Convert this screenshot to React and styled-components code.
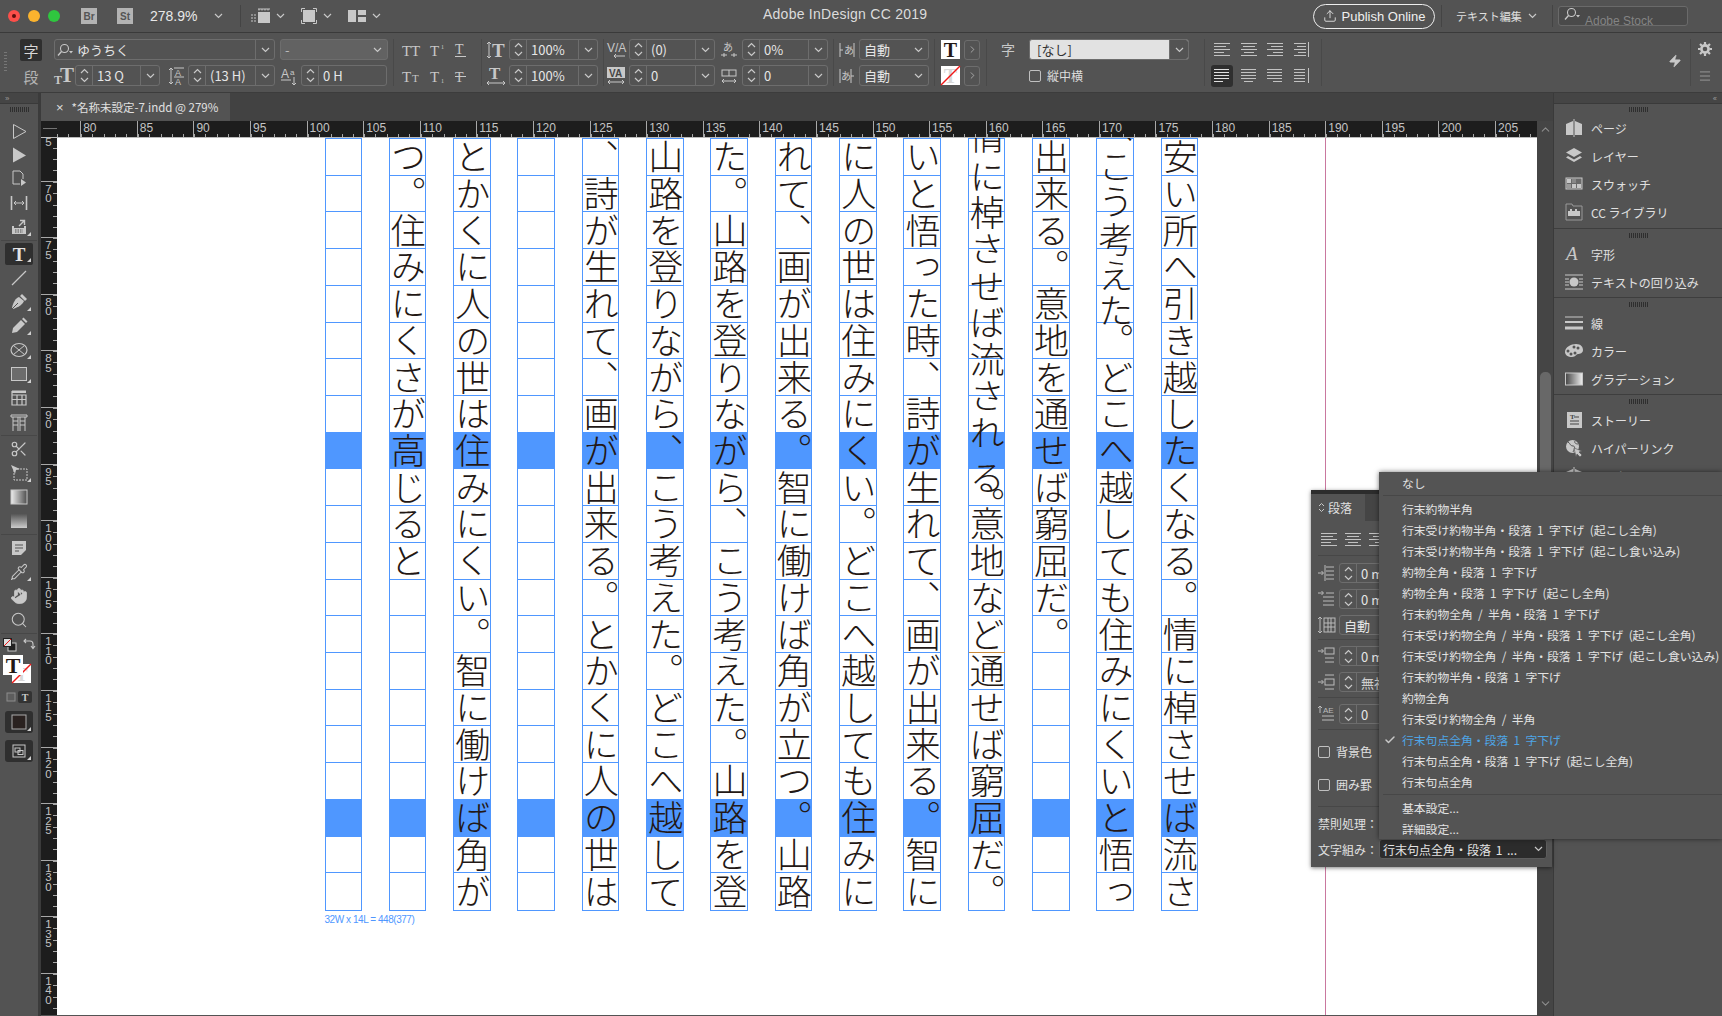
import React from 'react';
import styled, { createGlobalStyle } from 'styled-components';
import { Scissors, Hand, Search, Pipette, Check, Zap, Menu as MenuIcon, Upload, ChevronUp, ChevronDown, ChevronRight } from 'lucide-react';

const UI = `"Liberation Sans","Noto Sans CJK JP",sans-serif`;
const JP = `"Noto Sans CJK JP","Liberation Sans",sans-serif`;
const SERIF = `"Liberation Serif",serif`;
const INK = '#c8c8c8';

const Global = createGlobalStyle`
  html,body{margin:0;padding:0;background:#424242;overflow:hidden;}
  *{box-sizing:border-box;}
`;

const Window = styled.div`
  position:relative;width:1722px;height:1016px;overflow:hidden;background:#424242;
  display:flex;flex-direction:column;font-family:${UI};color:#e4e4e4;
`;

/* title bar */
const TitleBar = styled.div`
  height:33px;background:#535353;border-bottom:1px solid #3a3a3a;display:flex;align-items:center;flex:none;
`;
const Lights = styled.div`display:flex;gap:8px;margin-left:8px;width:73px;flex:none;`;
const Light = styled.span`width:12px;height:12px;border-radius:50%;background:${p => p.$c};display:flex;align-items:center;justify-content:center;
  &::after{content:"";width:4px;height:4px;border-radius:50%;background:${p => (p.$dot ? '#5a0f0d' : 'transparent')};}
`;
const AppBadge = styled.span`width:16px;height:16px;background:#b3b3b3;color:#555;font:bold 10px ${UI};display:flex;align-items:center;justify-content:center;margin-right:${p => p.$mr}px;flex:none;`;
const Zoom = styled.span`font:14px ${UI};color:#e8e8e8;width:64px;flex:none;`;
const TitleSep = styled.span`width:1px;height:22px;background:#444;flex:none;margin:0 ${p => p.$mr ?? 0}px 0 ${p => p.$ml ?? 0}px;`;
const TitleIcon = styled.span`display:flex;align-items:center;gap:6px;margin:0 ${p => p.$mr ?? 0}px 0 ${p => p.$ml ?? 0}px;flex:none;`;
const LeftGroup = styled.div`display:flex;align-items:center;width:763px;flex:none;`;
const Title = styled.div`font:14px ${UI};letter-spacing:.25px;color:#dcdcdc;width:164px;white-space:nowrap;flex:none;margin-top:-4px;`;
const RightGroup = styled.div`display:flex;align-items:center;margin-left:386px;flex:none;`;
const Publish = styled.div`height:25px;width:122px;border:1px solid #ededed;border-radius:13px;display:flex;align-items:center;justify-content:center;gap:5px;font:13px ${UI};color:#efefef;flex:none;`;
const Workspace = styled.span`font:11px ${JP};color:#e0e0e0;margin-left:14px;width:66px;flex:none;white-space:nowrap;`;
const StockSearch = styled.div`width:130px;height:20px;border:1px solid #6a6a6a;border-radius:3px;background:#4a4a4a;display:flex;align-items:flex-start;overflow:hidden;padding:0 0 0 5px;gap:4px;flex:none;`;
const StockText = styled.span`font:12px ${UI};color:#848484;margin-top:7px;white-space:nowrap;`;

/* control bar */
const ControlBar = styled.div`
  height:60px;background:#535353;border-bottom:1px solid #3c3c3c;display:flex;align-items:flex-start;padding-top:6px;flex:none;
`;
const Grip = styled.div`width:3px;height:20px;margin:13px 0 0 4px;flex:none;
  background:repeating-linear-gradient(180deg,#777 0 1px,transparent 1px 3px);`;
const ModeCol = styled.div`width:22px;margin-left:13px;display:flex;flex-direction:column;flex:none;gap:4px;`;
const ModeBtn = styled.div`height:22px;border-radius:2px;background:${p => (p.$on ? '#2f2f2f' : 'transparent')};color:${p => (p.$on ? '#d8d8d8' : '#b4b4b4')};font:15px ${JP};display:flex;align-items:center;justify-content:center;`;
const CtlGroup = styled.div`display:flex;flex-direction:column;gap:5px;margin-left:${p => p.$ml ?? 0}px;flex:none;`;
const CtlRow = styled.div`display:flex;align-items:center;height:21px;gap:${p => p.$gap ?? 0}px;`;
const VSep = styled.div`width:1px;height:47px;background:#494949;margin:0 ${p => p.$mr ?? 0}px 0 ${p => p.$ml ?? 0}px;flex:none;`;
const Field = styled.div`width:${p => p.$w}px;height:21px;border:1px solid #6d6d6d;border-radius:3px;display:flex;align-items:stretch;flex:none;overflow:hidden;margin-left:${p => p.$ml ?? 0}px;
  background:${p => p.$bg || 'transparent'};`;
const StepperBox = styled.div`width:17px;border-right:1px solid #6d6d6d;display:flex;flex-direction:column;align-items:center;justify-content:center;flex:none;color:${INK};`;
const FieldValue = styled.div`flex:1;display:flex;align-items:center;padding-left:${p => p.$pl ?? 3}px;font:13px ${JP};color:${p => p.$c || '#e6e6e6'};white-space:nowrap;overflow:hidden;gap:3px;`;
const DropSlot = styled.div`width:${p => p.$w ?? 19}px;border-left:${p => (p.$plain ? 'none' : '1px solid #6d6d6d')};background:${p => p.$bg || 'transparent'};display:flex;align-items:center;justify-content:center;flex:none;color:${INK};`;
const IconSlot = styled.div`width:${p => p.$w}px;height:21px;display:flex;align-items:center;justify-content:center;margin:${p => p.$mt ?? 0}px 0 0 ${p => p.$ml ?? 0}px;flex:none;color:${INK};`;
const TinyBtn = styled.div`width:16px;height:20px;border:1px solid #6d6d6d;border-radius:3px;display:flex;align-items:center;justify-content:center;color:${INK};margin-left:4px;`;
const CheckBox = styled.span`width:12px;height:12px;border:1px solid #c0c0c0;border-radius:2px;flex:none;`;
const CheckLabel = styled.span`font:12px ${JP};color:#dcdcdc;white-space:nowrap;`;
const LiteBtn = styled.div`width:22px;height:22px;border-radius:3px;background:${p => (p.$on ? '#2f2f2f' : 'transparent')};display:flex;align-items:center;justify-content:center;margin-left:${p => p.$ml ?? 0}px;flex:none;`;
const EndCol = styled.div`width:28px;display:flex;flex-direction:column;align-items:center;gap:13px;padding-top:3px;flex:none;color:${INK};`;

/* workspace */
const Main = styled.div`flex:1;display:flex;min-height:0;`;
const LeftDock = styled.div`width:38px;flex:none;background:#535353;display:flex;flex-direction:column;`;
const DockHeader = styled.div`height:11px;background:#454545;border-bottom:1px solid #3a3a3a;color:#9a9a9a;font:8px ${UI};letter-spacing:-1px;display:flex;align-items:center;padding:0 ${p => p.$pad ?? 0}px;justify-content:${p => p.$end ? 'flex-end' : 'flex-start'};flex:none;`;
const GripH = styled.div`width:${p => p.$w ?? 19}px;height:5px;margin:${p => p.$m ?? '3px auto 0'};background:repeating-linear-gradient(90deg,#2e2e2e 0 1px,transparent 1px 2px);flex:none;`;
const ToolList = styled.div`display:flex;flex-direction:column;align-items:center;margin-top:7px;color:${INK};`;
const Tool = styled.div`position:relative;width:28px;height:${p => (p.$on ? 22 : 24)}px;margin:${p => (p.$on ? '1px 0' : 0)};flex:none;display:flex;align-items:center;justify-content:center;border-radius:2px;background:${p => (p.$on ? '#2f2f2f' : 'transparent')};
  &::after{content:"";display:${p => (p.$fly ? 'block' : 'none')};position:absolute;right:2px;bottom:3px;border-style:solid;border-width:0 0 4px 4px;border-color:transparent transparent #d0d0d0 transparent;}
`;
const ToolSep = styled.div`width:36px;height:1px;background:#474747;margin:${p => p.$m ?? '1px 0 1px'};flex:none;`;
const SmallRow = styled.div`display:flex;align-items:center;justify-content:center;gap:${p => p.$gap ?? 6}px;width:100%;height:${p => p.$h}px;margin-top:${p => p.$mt ?? 0}px;flex:none;`;
const ProxyWrap = styled.div`width:32px;height:30px;margin-top:2px;flex:none;`;
const DarkWell = styled.div`position:relative;width:28px;height:22px;background:#2f2f2f;border-radius:3px;display:flex;align-items:center;justify-content:center;margin-top:${p => p.$mt}px;flex:none;
  &::after{content:"";position:absolute;right:2px;bottom:2px;border-style:solid;border-width:0 0 4px 4px;border-color:transparent transparent #d0d0d0 transparent;}
`;
const Gutter = styled.div`width:3px;background:#3b3b3b;flex:none;`;

const Center = styled.div`width:1512px;flex:none;display:flex;flex-direction:column;`;
const TabBar = styled.div`height:28px;background:#424242;display:flex;flex:none;`;
const DocTab = styled.div`width:189px;background:#535353;display:flex;align-items:center;padding-left:15px;font:11.5px ${JP};color:#e0e0e0;white-space:nowrap;`;
const TabClose = styled.span`font:13px ${UI};margin-right:8px;color:#dcdcdc;`;
const Stage = styled.div`flex:1;display:grid;grid-template-columns:16px 1480px 16px;grid-template-rows:17px 877px 1px;min-height:0;`;
const Corner = styled.div`background:#1d1d1d;position:relative;border-bottom:1px solid #bbb;
  &::after{content:"";position:absolute;left:2px;right:0;top:3px;bottom:2px;background:linear-gradient(#bbb,#bbb) 0 4px/100% 1px no-repeat;opacity:.55;}
`;
const TopRuler = styled.div`background:#1d1d1d;display:flex;overflow:hidden;border-bottom:1px solid #bbb;`;
const TICKS_H = `repeating-linear-gradient(90deg,#a8a8a8 0 1px,transparent 1px 11.32px) 0 100%/100% 3px no-repeat`;
const TICKS_V = `repeating-linear-gradient(180deg,#a8a8a8 0 1px,transparent 1px 11.32px) 100% 0/4px 100% no-repeat`;
const HSeg = styled.div`width:${p => p.$w ?? 56.6}px;flex:none;border-left:${p => (p.$blank ? 'none' : '1px solid #a8a8a8')};background:${TICKS_H};font:12px ${UI};color:#c4c4c4;padding-left:2px;line-height:14px;`;
const VRuler = styled.div`background:#1d1d1d;overflow:hidden;display:flex;flex-direction:column;`;
const VSeg = styled.div`height:56.6px;flex:none;border-top:1px solid #a8a8a8;background:${TICKS_V};padding:3px 0 0 3px;margin-top:${p => p.$mt ?? 0}px;`;
const VDigit = styled.div`font:11.5px/9.5px ${UI};color:#c4c4c4;width:9px;text-align:center;`;
const Canvas = styled.div`position:relative;background:#fff;overflow:hidden;padding-left:267.5px;display:flex;flex-direction:column;`;
const Guide = styled.div`position:absolute;left:1268px;top:0;bottom:0;width:1px;background:#c9789f;`;
const Frame = styled.div`display:flex;gap:26.95px;flex:none;`;
const GridCol = styled.div`width:37.4px;height:773px;border:1px solid #4f97ff;border-bottom-width:1px;display:grid;grid-template-rows:repeat(21,1fr);flex:none;`;
const Cell = styled.div`position:relative;display:flex;align-items:center;justify-content:center;min-height:0;
  background:${p => (p.$hi ? '#4f97ff' : 'transparent')};
  border-bottom:${p => (p.$last ? 'none' : `1px solid ${p.$mark ? '#c98a3c' : '#4f97ff'}`)};
`;
const Glyph = styled.span`display:block;writing-mode:vertical-rl;font:300 35px/36px ${JP};color:#231815;width:36px;height:35px;flex:none;transform:translateY(${p => p.$lift ?? 0}px);`;
const GlyphOver = styled(Glyph)`position:absolute;left:0;top:0;`;
const Caption = styled.div`font:10px ${UI};color:#4f97ff;margin-top:3px;letter-spacing:-.45px;`;
const ScrollBar = styled.div`grid-column:3;grid-row:1 / span 3;background:#454545;display:flex;flex-direction:column;align-items:center;color:#8d8d8d;padding-top:2px;`;
const Thumb = styled.div`width:11px;height:260px;background:#686868;border-radius:5px;margin-top:236px;flex:none;`;
const ScrollEnd = styled.div`margin-top:auto;margin-bottom:2px;`;
const FootStrip = styled.div`grid-column:1 / span 2;background:#535353;`;

/* right dock */
const RightDock = styled.div`width:169px;flex:none;background:#535353;border-left:1px solid #3a3a3a;display:flex;flex-direction:column;`;
const PanelGroup = styled.div`border-bottom:${p => (p.$open ? 'none' : '1px solid #3e3e3e')};padding:${p => (p.$first ? 2 : 3)}px 0 ${p => (p.$first ? 2 : 1)}px;`;
const PanelRow = styled.div`height:28px;display:flex;align-items:center;color:${INK};padding-left:11px;`;
const PanelIcon = styled.div`width:18px;height:18px;display:flex;align-items:center;justify-content:center;flex:none;`;
const PanelLabel = styled.span`margin-left:8px;font:12px ${JP};color:#e0e0e0;white-space:nowrap;`;

/* paragraph panel */
const ParaPanel = styled.div`position:absolute;left:1311px;top:490px;width:241px;height:377px;background:#535353;border-top:4px solid #2c2c2c;box-shadow:0 1px 4px rgba(0,0,0,.5);display:flex;flex-direction:column;color:${INK};`;
const ParaTabs = styled.div`height:27px;background:#454545;display:flex;flex:none;`;
const ParaTab = styled.div`width:54px;background:#535353;display:flex;align-items:center;padding-left:7px;gap:3px;font:12px ${JP};color:#e0e0e0;`;
const ParaSection = styled.div`padding:${p => p.$pad ?? '4px 0'};border-bottom:${p => (p.$end ? 'none' : '1px solid #474747')};margin:0 7px;flex:none;`;
const ParaRow = styled.div`height:${p => p.$h ?? 26}px;display:flex;align-items:center;`;
const ParaLabel = styled.span`font:12px ${JP};color:#e0e0e0;white-space:nowrap;width:${p => (p.$w ? `${p.$w}px` : 'auto')};margin-left:${p => p.$ml ?? 0}px;flex:none;`;
const ParaField = styled.div`margin-left:4px;width:90px;height:20px;border:1px solid #6d6d6d;border-radius:3px;display:flex;overflow:hidden;flex:none;`;
const AlignRowGap = styled.span`width:${p => p.$w}px;flex:none;`;
const JSelect = styled.div`width:168px;height:20px;background:#2c2c2c;border:1px solid #5c5c5c;border-radius:3px;display:flex;align-items:center;justify-content:space-between;padding:0 3px 0 3px;font:12px ${JP};word-spacing:2px;color:#e4e4e4;white-space:nowrap;margin-left:${p => p.$ml}px;flex:none;`;

const DropMenu = styled.div`position:absolute;left:1379px;top:472px;width:343px;height:367px;background:#545454;box-shadow:0 0 5px rgba(0,0,0,.55);display:flex;flex-direction:column;`;
const MenuRow = styled.div`height:21px;flex:none;display:flex;align-items:center;font:11.8px ${JP};word-spacing:2.7px;color:${p => (p.$sel ? '#4ea5e6' : '#e2e2e2')};white-space:pre;padding-left:${p => (p.$sel ? 5 : 23)}px;`;
const MenuCheck = styled.span`width:18px;display:flex;color:#c8c8c8;flex:none;`;
const MenuSep = styled.div`height:1px;background:#474747;margin:${p => p.$m} 0 ${p => p.$m} 4px;flex:none;`;

/* ---------- drawings ---------- */
const Svg = ({ w = 18, h = 18, vb, children }) => (
  <svg width={w} height={h} viewBox={vb || `0 0 ${w} ${h}`} fill="none" stroke="none" style={{ display: 'block', flex: 'none', overflow: 'visible' }}>{children}</svg>
);
const T = ({ x, y, s, w = 'bold', f = SERIF, c = INK, a = 'start', st, children }) => (
  <text x={x} y={y} fontSize={s} fontWeight={w} fontFamily={f} fontStyle={st} fill={c} textAnchor={a} stroke="none">{children}</text>
);
const Lines = ({ ys, x1, x2, sw = 1, c = INK }) => ys.map((y, i) => {
  const a = Array.isArray(x1) ? x1[i] : x1; const b = Array.isArray(x2) ? x2[i] : x2;
  return <line key={i} x1={a} x2={b} y1={y} y2={y} stroke={c} strokeWidth={sw} />;
});
const Chev = ({ c = INK }) => <Svg w={9} h={6}><polyline points="1,1 4.5,4.5 8,1" stroke={c} strokeWidth="1.2" /></Svg>;
const ChevUp = ({ c = INK }) => <Svg w={9} h={6}><polyline points="1,5 4.5,1.5 8,5" stroke={c} strokeWidth="1.2" /></Svg>;

const Stepper = () => <StepperBox><ChevUp /><Svg w={1} h={3} /><Chev /></StepperBox>;
const Drop = ({ w, plain }) => <DropSlot $w={w} $plain={plain}><Chev /></DropSlot>;

const SearchGlass = () => (
  <Svg w={17} h={14}>
    <circle cx="7.5" cy="5.5" r="4" stroke={INK} strokeWidth="1.1" />
    <line x1="4.5" y1="8.5" x2="1" y2="12.5" stroke={INK} strokeWidth="1.4" />
    <path d="M12 8h4l-2 2.5z" fill={INK} />
  </Svg>
);
const Gear = () => (
  <Svg w={14} h={14}>
    <circle cx="7" cy="7" r="3.6" stroke={INK} strokeWidth="2.6" />
    <path d="M7 0v2.500M7 11.500V14M0 7h2.500M11.500 7H14M2 2l1.800 1.800M10.200 10.200L12 12M12 2l-1.800 1.800M3.800 10.200L2 12" stroke={INK} strokeWidth="2.200" />
  </Svg>
);
const ScreenModeA = () => (
  <Svg w={19} h={16}>
    <rect x="7" y="4" width="12" height="11" fill={INK} />
    <Lines ys={[1]} x1={7} x2={19} c={INK} />
    <path d="M0 7h5M0 10h5M0 13h5M8 1v1.5M11 1v1.5M14 1v1.5M17 1v1.5" stroke={INK} strokeDasharray="2 1" />
  </Svg>
);
const ScreenModeB = () => (
  <Svg w={16} h={16}>
    <rect x="2" y="2" width="12" height="12" fill={INK} />
    <path d="M0.5 4V.5H4M12 .5h3.500V4M15.500 12v3.500H12M4 15.500H.5V12" stroke={INK} />
  </Svg>
);
const LayoutIcon = () => (
  <Svg w={18} h={14}>
    <rect x="0" y="1" width="8" height="12" fill={INK} /><rect x="10" y="1" width="8" height="5" fill={INK} /><rect x="10" y="8" width="8" height="5" fill={INK} />
  </Svg>
);

const Small = {
  size: <Svg w={20} h={20}><T x={0} y={18} s={12}>T</T><T x={6} y={16} s={21}>T</T></Svg>,
  lead: <Svg w={16} h={20}><path d="M3 2v16M1 4l2-2 2 2M1 16l2 2 2-2" stroke={INK} /><line x1="6" x2="16" y1="2" y2="2" stroke={INK} /><T x={7} y={10} s={9} w="normal" f={UI}>A</T><line x1="6" x2="16" y1="11" y2="11" stroke={INK} /><T x={7} y={19} s={9} w="normal" f={UI}>A</T></Svg>,
  base: <Svg w={16} h={20}><T x={0} y={12} s={12} w="normal" f={UI}>A</T><T x={9} y={9} s={8} w="normal" f={UI}>a</T><line x1="0" x2="10" y1="14" y2="14" stroke={INK} /><path d="M13 11v8M11 17l2 2 2-2" stroke={INK} /></Svg>,
  vscale: <Svg w={20} h={20}><path d="M3 2v16M1 4l2-2 2 2M1 16l2 2 2-2" stroke={INK} /><T x={6} y={17} s={19}>T</T></Svg>,
  hscale: <Svg w={20} h={20}><T x={3} y={13} s={17}>T</T><path d="M1 17h18M3 15l-2 2 2 2M17 15l2 2-2 2" stroke={INK} /></Svg>,
  kern: <Svg w={19} h={20}><T x={0} y={12} s={12} w="normal" f={UI}>V/A</T><path d="M7 16h11M9 14l-2 2 2 2" stroke={INK} /></Svg>,
  track: <Svg w={19} h={20}><rect x="0" y="1" width="18" height="11" fill={INK} /><T x={2} y={11} s={10} f={UI} c="#444">VA</T><path d="M1 16h16M3 14l-2 2 2 2M15 14l2 2-2 2" stroke={INK} /></Svg>,
  tsume: <Svg w={16} h={20}><T x={2} y={11} s={10} w="normal" f={JP}>あ</T><path d="M0 15h6M10 15h6M3 13v4M13 13v4" stroke={INK} /></Svg>,
  grid: <Svg w={16} h={20}><rect x="1" y="4" width="14" height="6" stroke={INK} /><line x1="8" x2="8" y1="4" y2="10" stroke={INK} /><path d="M1 15h14M3 13l-2 2 2 2M13 13l2 2-2 2" stroke={INK} /></Svg>,
  mojiA: <Svg w={16} h={20}><path d="M1 3v14M15 3v14" stroke={INK} /><path d="M1 10h3" stroke={INK} /><T x={5} y={14} s={10} w="normal" f={JP}>あ</T></Svg>,
  mojiB: <Svg w={16} h={20}><path d="M1 3v14M12 3v14" stroke={INK} /><T x={2} y={14} s={10} w="normal" f={JP}>あ</T><path d="M12 10h3" stroke={INK} /></Svg>,
};
const AlignGlyph = ({ kind, rows }) => {
  const sets = {
    l: [[0, 16], [0, 12], [0, 16], [0, 10], [0, 16]],
    c: [[0, 16], [2, 14], [0, 16], [3, 13], [0, 16]],
    r: [[0, 16], [4, 16], [0, 16], [6, 16], [0, 16]],
    t: [[0, 12], [3, 12], [0, 12], [4, 12], [0, 12]],
    j: [[0, 15], [0, 15], [0, 15], [0, 15], [0, 9]],
    jc: [[0, 15], [0, 15], [0, 15], [0, 15], [3, 12]],
    jr: [[0, 15], [0, 15], [0, 15], [0, 15], [6, 15]],
    jt: [[0, 11], [0, 11], [0, 11], [0, 11], [0, 11]],
  }[kind];
  const ys = [1.5, 4.5, 7.5, 10.5, 13.5];
  return (
    <Svg w={16} h={15}>
      {sets.map((s, i) => <line key={i} x1={s[0]} x2={s[1]} y1={ys[i]} y2={ys[i]} stroke={rows || '#c2c2c2'} />)}
      {(kind === 't' || kind === 'jt') && <line x1="14.5" x2="14.5" y1="0" y2="15" stroke="#c2c2c2" />}
    </Svg>
  );
};
const FillSwatch = () => <Svg w={19} h={19}><rect width="19" height="19" fill="#fff" /><T x={9.5} y={16.5} s={20} c="#231815" a="middle">T</T></Svg>;
const StrokeSwatch = () => <Svg w={19} h={19}><rect width="19" height="19" fill="#fff" /><T x={9.5} y={16.5} s={20} c="#d8d8d8" a="middle">T</T><line x1="0" y1="19" x2="19" y2="0" stroke="#f01818" strokeWidth="1.5" /></Svg>;

const I = {
  select: <Svg vb="0 0 18 18"><path d="M3.500 2.500v14L16 9.500z" stroke={INK} /></Svg>,
  direct: <Svg vb="0 0 18 18"><path d="M3 1.500v15L16 9.500z" fill={INK} /></Svg>,
  page: <Svg vb="0 0 18 18"><path d="M3 1h7l3 3v5M3 1v13h7" stroke={INK} /><path d="M11 9l5 3.500-5 3.500z" fill={INK} /></Svg>,
  gap: <Svg vb="0 0 18 18"><path d="M1.500 2v14M16.500 2v14" stroke={INK} strokeWidth="1.6" /><path d="M4 9h10M6 7L4 9l2 2M12 7l2 2-2 2" stroke={INK} /></Svg>,
  collect: <Svg vb="0 0 18 18"><path d="M2 8h2v2h10v-2h2v8H2z" fill={INK} /><path d="M9 8l5-5M10 2.500h4.500V7" stroke={INK} strokeWidth="1.400" /><path d="M5 12h8M5 14h8" stroke="#555" strokeDasharray="1.500 1" /></Svg>,
  type: <Svg vb="0 0 18 18"><T x={9} y={16} s={19} c="#e4e4e4" a="middle">T</T></Svg>,
  line: <Svg vb="0 0 18 18"><line x1="2" y1="16" x2="16" y2="2" stroke={INK} strokeWidth="1.200" /></Svg>,
  pen: <Svg vb="0 0 18 18"><path d="M2 15C3 9 6 5 9 4l5 4c-1 3-5 6-11 8z" fill={INK} /><path d="M10 3l2-2 5 5-2 2z" fill={INK} /><line x1="2" y1="16" x2="8" y2="10" stroke="#535353" /></Svg>,
  pencil: <Svg vb="0 0 18 18"><path d="M2 16l1-5L11 3l4 4-8 8z" fill={INK} /><path d="M12 2l1.500-1.500 4 4L16 6z" fill={INK} /></Svg>,
  ellipse: <Svg vb="0 0 18 18"><ellipse cx="9" cy="9" rx="8" ry="6.500" stroke={INK} strokeWidth="1.200" /><path d="M3.500 4.500l11 9M14.500 4.500l-11 9" stroke={INK} /></Svg>,
  rect: <Svg vb="0 0 18 18"><rect x="1.500" y="2.500" width="15" height="13" fill="#6c6c6c" stroke={INK} /></Svg>,
  gridT: <Svg vb="0 0 18 18"><path d="M2 2h14M2 2v14h14V6H2M2 10.500h14M7 6v10M12 6v10" stroke={INK} strokeWidth="1.200" /><path d="M2 2h14v2H2z" fill={INK} /></Svg>,
  colT: <Svg vb="0 0 18 18"><path d="M1 2h16v2H1zM3 4v14M8 4v14M15 4v14M10 4v14" stroke={INK} /><path d="M3 8h5M3 12h5M10 8h5M10 12h5" stroke={INK} /></Svg>,
  free: <Svg vb="0 0 18 18"><rect x="4" y="5" width="13" height="11" stroke={INK} strokeDasharray="2 1" /><path d="M1 1l9 4-4 1-1 4z" fill={INK} /></Svg>,
  grad: <Svg vb="0 0 18 18"><defs><linearGradient id="g1"><stop offset="0" stopColor="#eee" /><stop offset="1" stopColor="#4e4e4e" /></linearGradient></defs><rect x="1" y="2" width="16" height="14" fill="url(#g1)" stroke={INK} /></Svg>,
  feather: <Svg vb="0 0 18 18"><defs><linearGradient id="g2" x1="0" x2="0" y1="0" y2="1"><stop offset="0" stopColor="#555" /><stop offset="1" stopColor="#ccc" /></linearGradient></defs><rect x="1" y="2" width="16" height="14" fill="url(#g2)" /></Svg>,
  note: <Svg vb="0 0 18 18"><path d="M2 2h14v9l-5 5H2z" fill={INK} /><path d="M5 6h8M5 9h8M5 12h4" stroke="#535353" /></Svg>,
  swap: <Svg w={14} h={14}><path d="M2 4h6c2 0 3 1 3 3v4M4 2L2 4l2 2M9 9l2 2.500L13 9" stroke={INK} strokeWidth="1.100" /></Svg>,
  defaults: <Svg w={13} h={13}><rect x="5" y="5" width="8" height="8" fill="#222" stroke={INK} /><rect x="0.500" y="0.500" width="8" height="8" fill="#ddd" stroke="#222" /><line x1="1" y1="8" x2="8" y2="1" stroke="#f01818" /></Svg>,
  proxy: <Svg w={32} h={30}><rect x="9" y="9" width="19" height="19" fill="#fff" /><T x={18.5} y={26} s={18} c="#d8d8d8" a="middle">T</T><line x1="9" y1="28" x2="28" y2="9" stroke="#f01818" strokeWidth="1.500" /><rect x="0" y="0" width="20" height="20" fill="#fff" /><T x={10} y={18} s={22} c="#231815" a="middle">T</T></Svg>,
  square: <Svg w={10} h={10}><rect x="1" y="1" width="8" height="8" fill="#5d5d5d" stroke="#8d8d8d" /></Svg>,
  pages: <Svg><path d="M1 5l7-3v14H1zM17 5l-7-3v14h7z" fill={INK} /><line x1="9" x2="9" y1="0" y2="18" stroke={INK} /></Svg>,
  layers: <Svg><path d="M9 1l8 4.500-8 4.500-8-4.500z" fill={INK} /><path d="M3 9l-2 1.500L9 15l8-4.500L15 9l-6 3.500z" fill={INK} /></Svg>,
  swatch: <Svg><rect x="1" y="3" width="16" height="11" stroke={INK} fill="#6a6a6a" /><rect x="2" y="4" width="4" height="4" fill={INK} /><rect x="12" y="9" width="4" height="4" fill={INK} /><rect x="7" y="4" width="4" height="4" fill="#888" /><rect x="2" y="9" width="4" height="4" fill="#9a9a9a" /><rect x="7" y="9" width="4" height="4" fill={INK} /></Svg>,
  cc: <Svg><path d="M1 1h6l1 2h9v14H1z" stroke="#999" /><path d="M3 13V8h2V6h2v2h3V6h2v2h3v5z" fill={INK} /></Svg>,
  glyphs: <Svg><T x={1} y={15} s={19} w="normal" f={SERIF} st="italic" c={INK}>A</T></Svg>,
  wrap: <Svg><Lines ys={[2, 16]} x1={0} x2={18} /><Lines ys={[6, 9, 12]} x1={0} x2={4} /><Lines ys={[6, 9, 12]} x1={14} x2={18} /><circle cx="9" cy="9" r="4.500" fill={INK} /></Svg>,
  stroke: <Svg><Lines ys={[3]} x1={0} x2={18} sw={1} /><Lines ys={[8]} x1={0} x2={18} sw={2} /><Lines ys={[14]} x1={0} x2={18} sw={3} /></Svg>,
  palette: <Svg w={20} h={16}><path d="M1 9c0-5 6-8 11-8s7 3 7 6-3 4-5 4-2 3-6 3-7-2-7-5z" fill={INK} /><circle cx="7" cy="11" r="1.500" fill="#555" /><circle cx="11" cy="10" r="1.500" fill="#555" /><circle cx="14" cy="5" r="1.500" fill="#555" /><circle cx="10" cy="4" r="1.500" fill="#555" /><circle cx="4" cy="8" r="1.500" fill="#555" /></Svg>,
  gradP: <Svg><defs><linearGradient id="g3"><stop offset="0" stopColor="#444" /><stop offset="1" stopColor="#eee" /></linearGradient></defs><rect x="0.500" y="3" width="17" height="12" fill="url(#g3)" stroke={INK} /></Svg>,
  story: <Svg><rect x="2" y="1" width="15" height="16" fill={INK} /><T x={5} y={8} s={7} c="#444" f={SERIF}>T</T><path d="M9 6h5M5 10h9M5 13h9" stroke="#444" /></Svg>,
  link: <Svg><circle cx="7.500" cy="7.500" r="6.500" fill={INK} /><path d="M3 3c3 2 2 4 5 4s1 4 0 6M10 2c-1 2 1 3 3 3" stroke="#535353" /><path d="M9 9l8 3-3 1 3 3-2 2-3-3-1 3z" fill={INK} stroke="#535353" strokeWidth=".6" /></Svg>,
};

/* ---------- data ---------- */
const plain = (s) => Array.from(s).map((t) => ({ t }));
const lifted = (s, lifts, extra = {}, marks = {}) => Array.from(s).map((t, i) => ({ t, lift: lifts[i], extra: extra[i], mark: marks[i] }));
const COLUMNS = [
  plain(''),
  plain('つ。住みにくさが高じると'),
  plain('とかくに人の世は住みにくい。智に働けば角が'),
  plain(''),
  plain('、詩が生れて、画が出来る。とかくに人の世は'),
  plain('山路を登りながら、こう考えた。どこへ越して'),
  plain('た。山路を登りながら、こう考えた。山路を登'),
  plain('れて、画が出来る。智に働けば角が立つ。山路'),
  plain('に人の世は住みにくい。どこへ越しても住みに'),
  plain('いと悟った時、詩が生れて、画が出来る。智に'),
  lifted('情に棹させば流される意地など通せば窮屈だ。',
    { 0: -20, 1: -17, 2: -18, 3: -18, 4: -17, 5: -18, 6: -18, 7: -18, 8: -18, 9: -10 },
    { 9: { t: '。', lift: 18 } }, { 13: true }),
  plain('出来る。意地を通せば窮屈だ。'),
  lifted('こう考えた。どこへ越しても住みにくいと悟っ',
    { 0: 10, 1: 8, 2: 9, 3: 9, 4: 7 }, { 0: { t: '、', lift: -9 } }),
  plain('安い所へ引き越したくなる。情に棹させば流さ'),
];
const ROWS = Array.from({ length: 21 }, (_, i) => i);
const HI = new Set([8, 18]);

const H_MARKS = Array.from({ length: 27 }, (_, i) => 80 + i * 5);
const V_MARKS = Array.from({ length: 16 }, (_, i) => 65 + i * 5);

const MENU_A = [
  '行末約物半角',
  '行末受け約物半角・段落 1 字下げ (起こし全角)',
  '行末受け約物半角・段落 1 字下げ (起こし食い込み)',
  '約物全角・段落 1 字下げ',
  '約物全角・段落 1 字下げ (起こし全角)',
  '行末約物全角 / 半角・段落 1 字下げ',
  '行末受け約物全角 / 半角・段落 1 字下げ (起こし全角)',
  '行末受け約物全角 / 半角・段落 1 字下げ (起こし食い込み)',
  '行末約物半角・段落 1 字下げ',
  '約物全角',
  '行末受け約物全角 / 半角',
];
const MENU_B = ['行末句点全角・段落 1 字下げ (起こし全角)', '行末句点全角'];

const PANELS = [
  [['pages', 'ページ'], ['layers', 'レイヤー'], ['swatch', 'スウォッチ'], ['cc', 'CC ライブラリ']],
  [['glyphs', '字形'], ['wrap', 'テキストの回り込み']],
  [['stroke', '線'], ['palette', 'カラー'], ['gradP', 'グラデーション']],
  [['story', 'ストーリー'], ['link', 'ハイパーリンク'], ['pages', 'リンク']],
];

const Field1 = ({ w, v, ml }) => (
  <Field $w={w} $ml={ml}><Stepper /><FieldValue $pl={4}>{v}</FieldValue><Drop /></Field>
);

const ModeTagBox = styled.span`width:14px;height:12px;background:#333;border-radius:2px;display:flex;align-items:center;justify-content:center;font:bold 10px ${SERIF};color:${INK};`;
const ParaIconSlot = styled.div`width:17px;height:20px;flex:none;color:${INK};`;
function ParaIcon({ kind }) {
  const lines = <Lines ys={[4, 8, 12, 16]} x1={8} x2={16} c="#bbb" />;
  const arrow = <path d="M0 10h5M3.500 8L5.500 10 3.500 12" stroke="#bbb" />;
  const map = {
    left: <>{arrow}<line x1="7" x2="7" y1="2" y2="18" stroke="#bbb" />{lines}</>,
    first: <><path d="M0 4h5M3.500 2L5.500 4 3.500 6" stroke="#bbb" /><Lines ys={[4, 8, 12, 16]} x1={[8, 5, 5, 5]} x2={16} c="#bbb" /></>,
    grid: <><path d="M2 2v16M0 4l2-2 2 2M0 16l2 2 2-2" stroke="#bbb" /><rect x="6" y="3" width="11" height="14" stroke="#bbb" /><path d="M6 8h11M6 12h11M10 3v14M13 3v14" stroke="#bbb" /></>,
    before: <><path d="M0 5h5M3.500 3L5.500 5 3.500 7" stroke="#bbb" /><rect x="7" y="2" width="9" height="6" stroke="#bbb" /><Lines ys={[12, 16]} x1={7} x2={16} c="#bbb" /></>,
    after: <>{arrow}<Lines ys={[3, 17]} x1={7} x2={16} c="#bbb" /><rect x="7" y="7" width="9" height="6" stroke="#bbb" /></>,
    drop: <><T x={5} y={9} s={8} w="normal" f={UI} c="#bbb">AE</T><path d="M2 2v7M0 4l2-2 2 2" stroke="#bbb" /><Lines ys={[12, 16]} x1={4} x2={16} c="#bbb" /></>,
  };
  return <ParaIconSlot><Svg w={17} h={20}>{map[kind]}</Svg></ParaIconSlot>;
}

export default function App() {
  return (
    <Window>
      <Global />
      <TitleBar>
        <LeftGroup>
          <Lights>
            <Light $c="#fc4f4a" $dot /><Light $c="#fbb32e" /><Light $c="#2fc63f" />
          </Lights>
          <AppBadge $mr={20}>Br</AppBadge>
          <AppBadge $mr={17}>St</AppBadge>
          <Zoom>278.9%</Zoom>
          <TitleIcon $mr={17}><Chev /></TitleIcon>
          <TitleSep $mr={10} />
          <TitleIcon $mr={16}><ScreenModeA /><Chev /></TitleIcon>
          <TitleIcon $mr={16}><ScreenModeB /><Chev /></TitleIcon>
          <TitleIcon><LayoutIcon /><Chev /></TitleIcon>
        </LeftGroup>
        <Title>Adobe InDesign CC 2019</Title>
        <RightGroup>
          <Publish><Upload size={14} strokeWidth={1.4} />Publish Online</Publish>
          <TitleSep $ml={6} />
          <Workspace>テキスト編集</Workspace>
          <TitleIcon $ml={6}><Chev /></TitleIcon>
          <TitleSep $ml={15} $mr={5} />
          <StockSearch><SearchGlass /><StockText>Adobe Stock</StockText></StockSearch>
        </RightGroup>
      </TitleBar>

      <ControlBar>
        <Grip />
        <ModeCol>
          <ModeBtn $on>字</ModeBtn>
          <ModeBtn>段</ModeBtn>
        </ModeCol>
        <CtlGroup $ml={12}>
          <CtlRow $gap={5}>
            <Field $w={221}><FieldValue $pl={2}><SearchGlass />ゆうちく</FieldValue><Drop /></Field>
            <Field $w={108} $bg="#626262"><FieldValue $pl={4} $c="#bbb">-</FieldValue><Drop plain /></Field>
          </CtlRow>
          <CtlRow>
            <IconSlot $w={20}>{Small.size}</IconSlot>
            <Field1 w={85} v="13 Q" ml={1} />
            <IconSlot $w={16} $ml={8}>{Small.lead}</IconSlot>
            <Field1 w={87} v="(13 H)" ml={4} />
            <IconSlot $w={16} $ml={6}>{Small.base}</IconSlot>
            <Field $w={86} $ml={4}><Stepper /><FieldValue $pl={4}>0 H</FieldValue></Field>
          </CtlRow>
        </CtlGroup>
        <VSep $ml={5} />
        <CtlGroup $ml={8}>
          <CtlRow $gap={9}>
            <Svg w={19} h={18}><T x={0} y={15} s={15} w="normal">T</T><T x={9} y={15} s={15} w="normal">T</T></Svg>
            <Svg w={16} h={18}><T x={0} y={15} s={15} w="normal">T</T><T x={11} y={8} s={6} w="normal">1</T></Svg>
            <Svg w={11} h={18}><T x={0} y={13} s={14} w="normal">T</T><line x1="0" x2="11" y1="15.500" y2="15.500" stroke={INK} /></Svg>
          </CtlRow>
          <CtlRow $gap={9}>
            <Svg w={19} h={18}><T x={0} y={15} s={15} w="normal">T</T><T x={10} y={15} s={11} w="normal">T</T></Svg>
            <Svg w={16} h={18}><T x={0} y={15} s={15} w="normal">T</T><T x={11} y={16} s={6} w="normal">1</T></Svg>
            <Svg w={11} h={18}><T x={0} y={15} s={14} w="normal">T</T><line x1="0" x2="11" y1="9.500" y2="9.500" stroke={INK} /></Svg>
          </CtlRow>
        </CtlGroup>
        <VSep $ml={15} />
        <CtlGroup $ml={5}>
          <CtlRow><IconSlot $w={18}>{Small.vscale}</IconSlot><Field1 w={89} v="100%" ml={4} /></CtlRow>
          <CtlRow><IconSlot $w={18}>{Small.hscale}</IconSlot><Field1 w={89} v="100%" ml={4} /></CtlRow>
        </CtlGroup>
        <VSep $ml={5} />
        <CtlGroup $ml={3}>
          <CtlRow><IconSlot $w={19}>{Small.kern}</IconSlot><Field1 w={86} v="(0)" ml={3} /><IconSlot $w={16} $ml={6}>{Small.tsume}</IconSlot><Field1 w={86} v="0%" ml={5} /></CtlRow>
          <CtlRow><IconSlot $w={19}>{Small.track}</IconSlot><Field1 w={86} v="0" ml={3} /><IconSlot $w={16} $ml={6}>{Small.grid}</IconSlot><Field1 w={86} v="0" ml={5} /></CtlRow>
        </CtlGroup>
        <VSep $ml={5} />
        <CtlGroup $ml={5}>
          <CtlRow><IconSlot $w={16}>{Small.mojiA}</IconSlot><Field $w={70} $ml={4}><FieldValue $pl={4}>自動</FieldValue><Drop plain /></Field></CtlRow>
          <CtlRow><IconSlot $w={16}>{Small.mojiB}</IconSlot><Field $w={70} $ml={4}><FieldValue $pl={4}>自動</FieldValue><Drop plain /></Field></CtlRow>
        </CtlGroup>
        <VSep $ml={5} />
        <CtlGroup $ml={6}>
          <CtlRow><FillSwatch /><TinyBtn><ChevronRight size={11} strokeWidth={1.5} /></TinyBtn></CtlRow>
          <CtlRow><StrokeSwatch /><TinyBtn><ChevronRight size={11} strokeWidth={1.5} /></TinyBtn></CtlRow>
        </CtlGroup>
        <VSep $ml={6} />
        <CtlGroup $ml={14}>
          <CtlRow>
            <IconSlot $w={15}><Svg w={15} h={18}><T x={0} y={14} s={14} w="normal" f={JP}>字</T></Svg></IconSlot>
            <Field $w={160} $ml={13} $bg="#e2e2e2"><FieldValue $pl={7} $c="#333">[なし]</FieldValue><DropSlot $w={19} $bg="#535353"><Chev /></DropSlot></Field>
          </CtlRow>
          <CtlRow $gap={6}>
            <Svg w={22} h={12} />
            <CheckBox />
            <CheckLabel>縦中横</CheckLabel>
          </CtlRow>
        </CtlGroup>
        <VSep $ml={15} $mr={6} />
        <CtlGroup>
          <CtlRow>
            <LiteBtn><AlignGlyph kind="l" /></LiteBtn><LiteBtn $ml={5}><AlignGlyph kind="c" /></LiteBtn><LiteBtn $ml={4}><AlignGlyph kind="r" /></LiteBtn><LiteBtn $ml={5}><AlignGlyph kind="t" /></LiteBtn>
          </CtlRow>
          <CtlRow>
            <LiteBtn $on><AlignGlyph kind="j" rows="#e0e0e0" /></LiteBtn><LiteBtn $ml={5}><AlignGlyph kind="jc" /></LiteBtn><LiteBtn $ml={4}><AlignGlyph kind="jr" /></LiteBtn><LiteBtn $ml={5}><AlignGlyph kind="jt" /></LiteBtn>
          </CtlRow>
        </CtlGroup>
        <VSep $ml={8} $mr={346} />
        <IconSlot $w={14} $mt={11}><Zap size={16} strokeWidth={1} fill={INK} /></IconSlot>
        <VSep $ml={8} />
        <EndCol>
          <Gear />
          <MenuIcon size={14} strokeWidth={1} />
        </EndCol>
      </ControlBar>

      <Main>
        <LeftDock>
          <DockHeader $pad={5}>››</DockHeader>
          <GripH />
          <ToolList>
            <Tool>{I.select}</Tool>
            <Tool>{I.direct}</Tool>
            <Tool>{I.page}</Tool>
            <Tool>{I.gap}</Tool>
            <Tool $fly>{I.collect}</Tool>
            <ToolSep />
            <Tool $on $fly>{I.type}</Tool>
            <Tool>{I.line}</Tool>
            <Tool $fly>{I.pen}</Tool>
            <Tool $fly>{I.pencil}</Tool>
            <Tool $fly>{I.ellipse}</Tool>
            <Tool $fly>{I.rect}</Tool>
            <Tool>{I.gridT}</Tool>
            <Tool>{I.colT}</Tool>
            <ToolSep />
            <Tool><Scissors size={18} strokeWidth={1.6} /></Tool>
            <Tool $fly>{I.free}</Tool>
            <Tool>{I.grad}</Tool>
            <Tool>{I.feather}</Tool>
            <ToolSep />
            <Tool>{I.note}</Tool>
            <Tool $fly><Pipette size={18} strokeWidth={1.4} /></Tool>
            <Tool><Hand size={18} fill={INK} strokeWidth={1} /></Tool>
            <Tool><Search size={18} strokeWidth={1.4} /></Tool>
            <ToolSep />
            <SmallRow $h={18} $gap={6}>{I.defaults}{I.swap}</SmallRow>
            <ProxyWrap>{I.proxy}</ProxyWrap>
            <SmallRow $h={14} $mt={5} $gap={2}>
              {I.square}
              <ModeTagBox>T</ModeTagBox>
            </SmallRow>
            <DarkWell $mt={7}><Svg w={16} h={16}><rect x="1" y="1" width="14" height="14" fill="#2a2220" stroke="#aaa" /></Svg></DarkWell>
            <DarkWell $mt={7}><Svg w={14} h={14}><rect x="1" y="1" width="12" height="12" stroke={INK} /><rect x="3" y="4" width="5" height="4" stroke={INK} /><rect x="6" y="6.500" width="5" height="4" stroke={INK} /></Svg></DarkWell>
          </ToolList>
        </LeftDock>
        <Gutter />
        <Center>
          <TabBar>
            <DocTab><TabClose>×</TabClose>*名称未設定-7.indd @ 279%</DocTab>
          </TabBar>
          <Stage>
            <Corner />
            <TopRuler>
              <HSeg $blank $w={23.2} />
              {H_MARKS.map((m) => <HSeg key={m}>{m}</HSeg>)}
            </TopRuler>
            <ScrollBar>
              <ChevronUp size={13} />
              <Thumb />
              <ScrollEnd><ChevronDown size={13} /></ScrollEnd>
            </ScrollBar>
            <VRuler>
              {V_MARKS.map((m, i) => (
                <VSeg key={m} $mt={i === 0 ? -14 : 0}>
                  {String(m).split('').map((d, j) => <VDigit key={j}>{d}</VDigit>)}
                </VSeg>
              ))}
            </VRuler>
            <Canvas>
              <Frame>
                {COLUMNS.map((col, c) => (
                  <GridCol key={c}>
                    {ROWS.map((r) => {
                      const item = col[r];
                      return (
                        <Cell key={r} $hi={HI.has(r)} $last={r === 20} $mark={item && item.mark}>
                          {item && <Glyph $lift={item.lift}>{item.t}</Glyph>}
                          {item && item.extra && <GlyphOver $lift={item.extra.lift}>{item.extra.t}</GlyphOver>}
                        </Cell>
                      );
                    })}
                  </GridCol>
                ))}
              </Frame>
              <Caption>32W x 14L = 448(377)</Caption>
              <Guide />
            </Canvas>
            <FootStrip />
          </Stage>
        </Center>
        <RightDock>
          <DockHeader $pad={6} $end>‹‹</DockHeader>
          {PANELS.map((group, g) => (
            <PanelGroup key={g} $open={g === 3} $first={g === 0}>
              <GripH $m="1px auto 2px" />
              {group.map(([icon, label]) => (
                <PanelRow key={label}>
                  <PanelIcon>{I[icon]}</PanelIcon>
                  <PanelLabel>{label}</PanelLabel>
                </PanelRow>
              ))}
            </PanelGroup>
          ))}
        </RightDock>
      </Main>

      <ParaPanel>
        <ParaTabs>
          <ParaTab><Svg w={7} h={11}><path d="M1 4l2.500-2.500L6 4M1 7l2.500 2.500L6 7" stroke={INK} /></Svg>段落</ParaTab>
        </ParaTabs>
        <ParaSection $pad="7px 0 5px">
          <ParaRow $h={22}>
            <AlignRowGap $w={3} /><AlignGlyph kind="l" /><AlignRowGap $w={8} /><AlignGlyph kind="c" /><AlignRowGap $w={8} /><AlignGlyph kind="r" />
          </ParaRow>
        </ParaSection>
        <ParaSection $pad="4px 0 1px">
          <ParaRow><ParaIcon kind="left" /><ParaField><Stepper /><FieldValue $pl={4}>0 mm</FieldValue></ParaField></ParaRow>
          <ParaRow><ParaIcon kind="first" /><ParaField><Stepper /><FieldValue $pl={4}>0 mm</FieldValue></ParaField></ParaRow>
          <ParaRow><ParaIcon kind="grid" /><ParaField><FieldValue $pl={4}>自動</FieldValue></ParaField></ParaRow>
        </ParaSection>
        <ParaSection $pad="3px 0 2px">
          <ParaRow><ParaIcon kind="before" /><ParaField><Stepper /><FieldValue $pl={4}>0 mm</FieldValue></ParaField></ParaRow>
          <ParaRow><ParaIcon kind="after" /><ParaField><Stepper /><FieldValue $pl={4} $c="#cfcfcf">無視</FieldValue></ParaField></ParaRow>
        </ParaSection>
        <ParaSection $pad="3px 0 2px">
          <ParaRow><ParaIcon kind="drop" /><ParaField><Stepper /><FieldValue $pl={4}>0</FieldValue></ParaField></ParaRow>
        </ParaSection>
        <ParaSection $pad="5px 0 5px">
          <ParaRow $h={33}><CheckBox /><ParaLabel $ml={6}>背景色</ParaLabel></ParaRow>
          <ParaRow $h={33}><CheckBox /><ParaLabel $ml={6}>囲み罫</ParaLabel></ParaRow>
        </ParaSection>
        <ParaSection $end $pad="3px 0 0">
          <ParaRow><ParaLabel $w={56}>禁則処理：</ParaLabel></ParaRow>
          <ParaRow>
            <ParaLabel $w={56}>文字組み：</ParaLabel>
            <JSelect $ml={5}>行末句点全角・段落 1 ...<Chev /></JSelect>
          </ParaRow>
        </ParaSection>
      </ParaPanel>

      <DropMenu>
        <MenuRow>なし</MenuRow>
        <MenuSep $m="2px" />
        {MENU_A.map((m) => <MenuRow key={m}>{m}</MenuRow>)}
        <MenuRow $sel><MenuCheck><Check size={12} strokeWidth={3} /></MenuCheck>行末句点全角・段落 1 字下げ</MenuRow>
        {MENU_B.map((m) => <MenuRow key={m}>{m}</MenuRow>)}
        <MenuSep $m="2px" />
        <MenuRow>基本設定...</MenuRow>
        <MenuRow>詳細設定...</MenuRow>
      </DropMenu>
    </Window>
  );
}
